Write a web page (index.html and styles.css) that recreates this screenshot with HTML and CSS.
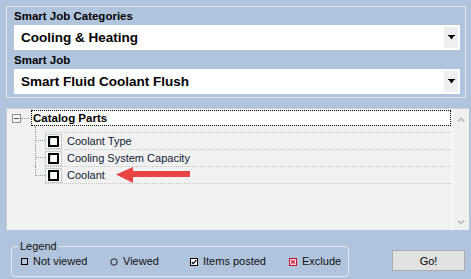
FILE: index.html
```html
<!DOCTYPE html>
<html>
<head>
<meta charset="utf-8">
<link rel="stylesheet" href="styles.css">
</head>
<body>
<div class="group">
  <div class="label">Smart Job Categories</div>
  <div class="combo"><span class="combo-text">Cooling &amp; Heating</span><span class="drop"><svg width="7" height="5" viewBox="0 0 7 5"><polygon points="0,0 7,0 7,1 6,1 3.5,4.5 1,1 0,1" fill="#000"/></svg></span></div>
  <div class="label second">Smart Job</div>
  <div class="combo"><span class="combo-text">Smart Fluid Coolant Flush</span><span class="drop"><svg width="7" height="5" viewBox="0 0 7 5"><polygon points="0,0 7,0 7,1 6,1 3.5,4.5 1,1 0,1" fill="#000"/></svg></span></div>
</div>

<div class="tree">
  <div class="tree-body">
    <div class="root">
      <span class="minus"><span class="minus-bar"></span></span>
      <span class="root-link"></span>
      <span class="root-label">Catalog Parts</span>
    </div>
    <div class="kids">
      <div class="conn conn-top"></div><div class="spacer"></div>
      <div class="conn conn-mid"><div class="h"></div></div>
      <div class="kid"><span class="chk"><span class="box"></span></span><span class="kid-text">Coolant Type</span></div>
      <div class="conn conn-mid"><div class="h"></div></div>
      <div class="kid"><span class="chk"><span class="box"></span></span><span class="kid-text">Cooling System Capacity</span></div>
      <div class="conn"><div class="h last"></div></div>
      <div class="kid kid-last"><span class="chk"><span class="box"></span></span><span class="kid-text">Coolant</span></div>
    </div>
    <svg class="arrow" width="74" height="16" viewBox="0 0 74 16"><polygon points="0,7.5 17,0 17,4 74,4 74,10 17,10 17,16" fill="#e84444"/></svg>
  </div>
  <div class="scroll">
    <svg width="8" height="5" viewBox="0 0 8 5"><polyline points="1,4.5 4,1.5 7,4.5" fill="none" stroke="#c3c3c3" stroke-width="2"/></svg>
    <svg width="8" height="5" viewBox="0 0 8 5"><polyline points="1,0.5 4,3.5 7,0.5" fill="none" stroke="#c3c3c3" stroke-width="2"/></svg>
  </div>
</div>

<div class="bottom">
  <fieldset class="legend-box">
    <legend>Legend</legend>
    <div class="legend-items">
      <span class="item"><svg width="7" height="7" viewBox="0 0 7 7"><rect x="0.5" y="0.5" width="6" height="6" fill="none" stroke="#000"/></svg>Not viewed</span>
      <span class="item"><svg width="8" height="8" viewBox="0 0 8 8"><circle cx="4" cy="4" r="3.2" fill="none" stroke="#222"/></svg>Viewed</span>
      <span class="item"><svg width="8" height="8" viewBox="0 0 8 8"><rect x="0.5" y="0.5" width="7" height="7" fill="#fff" stroke="#000"/><polyline points="1.8,4 3.3,5.6 6.3,2.2" fill="none" stroke="#000" stroke-width="1.2"/></svg>Items posted</span>
      <span class="item"><svg width="8" height="8" viewBox="0 0 8 8"><rect x="0.5" y="0.5" width="7" height="7" fill="#f6d0d6" stroke="#c8102e"/><path d="M2.3,2.3 L5.7,5.7 M5.7,2.3 L2.3,5.7" stroke="#c8102e" stroke-width="1.2"/></svg>Exclude</span>
    </div>
  </fieldset>
  <button class="go">Go!</button>
</div>
</body>
</html>
```

FILE: styles.css
```css
html, body {
  margin: 0;
  padding: 0;
}
body {
  width: 471px;
  height: 279px;
  background: #b0c4de;
  font-family: "Liberation Sans", Arial, sans-serif;
  color: #000;
  overflow: hidden;
}
.group {
  margin: 6px 5px 0 6px;
  border: 1px solid #dfe6ef;
  padding: 0 5px 4px 7px;
  height: 92px;
  box-sizing: border-box;
}
.label {
  font-size: 11.5px;
  font-weight: bold;
  height: 18px;
  line-height: 18px;
}
.label.second {
  height: 19px;
  line-height: 20px;
}
.combo {
  height: 25px;
  background: #fff;
  display: flex;
  align-items: center;
  justify-content: space-between;
  padding: 0 2px 0 7px;
}
.combo-text {
  font-size: 13.5px;
  font-weight: bold;
}
.drop {
  width: 14px;
  height: 21px;
  background: #efefef;
  display: flex;
  align-items: center;
  justify-content: center;
}
.drop svg { display: block; }

.tree {
  margin: 10px 2px 0 6px;
  height: 122px;
  display: flex;
  border-top: 1px solid #c9d0d8;
  border-left: 1px solid #c9d0d8;
  background: #f1f1f1;
  box-sizing: border-box;
}
.tree-body {
  flex: 1;
  position: relative;
  padding-top: 1px;
}
.root {
  display: flex;
  align-items: center;
  height: 16px;
}
.minus {
  margin-left: 5px;
  width: 9px;
  height: 9px;
  box-sizing: border-box;
  border: 1px solid #8e8f8f;
  background: #f7f7f7;
  display: flex;
  align-items: center;
  justify-content: center;
}
.minus-bar {
  width: 5px;
  height: 1px;
  background: #3d5a8a;
}
.root-link {
  width: 10px;
  border-top: 1px dotted #9a9a9a;
}
.root-label {
  flex: 1;
  height: 16px;
  box-sizing: border-box;
  margin-right: 1px;
  border: 1px dotted #000;
  background: #fff;
  font-size: 11.5px;
  font-weight: bold;
  line-height: 14px;
  padding-left: 1px;
}
.kids {
  display: grid;
  grid-template-columns: 10px 1fr;
  grid-template-rows: 6px 17px 17px 18px;
  margin-left: 28px;
  margin-right: 1px;
}
.conn {
  box-sizing: border-box;
}
.conn-top, .conn-mid {
  border-left: 1px dotted #9a9a9a;
}
.conn-mid .h {
  height: 9px;
  border-bottom: 1px dotted #9a9a9a;
  box-sizing: border-box;
}
.h.last {
  height: 10px;
  box-sizing: border-box;
  border-left: 1px dotted #9a9a9a;
  border-bottom: 1px dotted #9a9a9a;
}
.kid {
  display: flex;
  align-items: center;
  border-top: 1px dotted #c6c6c6;
  box-sizing: border-box;
}
.kid-last {
  border-bottom: 1px dotted #c6c6c6;
}
.chk {
  width: 17px;
  height: 15px;
  box-sizing: border-box;
  border: 1px solid #c4ccd4;
  background: #f6f8f9;
  display: flex;
  align-items: center;
  justify-content: center;
  margin-right: 5px;
}
.box {
  width: 11px;
  height: 11px;
  box-sizing: border-box;
  border: 2px solid #000;
  background: #fff;
  box-shadow: inset 1px 0 0 #bfe0f0;
}
.kid-text {
  font-size: 11px;
  color: #101a33;
  line-height: 16px;
}
.arrow {
  position: absolute;
  left: 109px;
  top: 58px;
}
.scroll {
  width: 17px;
  box-sizing: border-box;
  border-left: 1px solid #fff;
  background: #f0f0f0;
  display: flex;
  flex-direction: column;
  align-items: center;
  justify-content: space-between;
  padding: 8px 0 5px;
}
.scroll svg { display: block; }

.bottom {
  display: flex;
  justify-content: space-between;
  align-items: flex-start;
  margin: 10px 6px 0 11px;
}
.legend-box {
  margin: 0;
  width: 338px;
  box-sizing: border-box;
  border: 1px solid #e2e8f0;
  border-radius: 4px;
  padding: 1px 4px 7px 9px;
  font-size: 11px;
  color: #111;
}
.legend-box legend {
  padding: 0 2px;
  margin-left: -3px;
  line-height: 13px;
}
.legend-items {
  display: grid;
  grid-template-columns: 89px 80px 99px auto;
  line-height: 15px;
}
.item {
  display: flex;
  align-items: center;
  gap: 5px;
}
.item svg { display: block; }
.go {
  margin-top: 10px;
  width: 73px;
  height: 21px;
  background: #e1e1e1;
  border: 1px solid #adadad;
  font-family: "Liberation Sans", Arial, sans-serif;
  font-size: 11px;
  color: #000;
  padding: 0;
}
```
